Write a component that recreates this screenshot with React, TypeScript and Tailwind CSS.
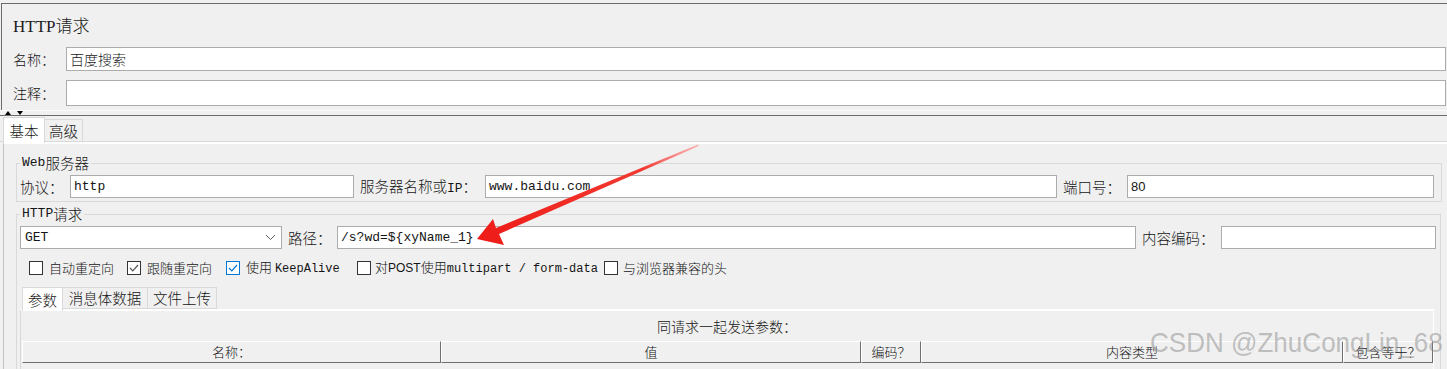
import React from "react";

const mono = "font-['Liberation_Mono','Noto_Sans_CJK_SC',monospace]";

function Field({ className = "", children }: { className?: string; children?: React.ReactNode }) {
  return (
    <div className={`h-[23px] bg-white border border-[#acacac] flex items-center px-[3px] shrink-0 ${className}`}>
      {children}
    </div>
  );
}

function Check({ checked, blue }: { checked?: boolean; blue?: boolean }) {
  const border = blue ? "border-[#0078d7]" : "border-[#333333]";
  return (
    <div className={`w-[14px] h-[14px] bg-white border ${border} flex items-center justify-center shrink-0`}>
      {checked && (
        <svg width="10" height="8" viewBox="0 0 10 8">
          <polyline points="1,4 3.8,6.8 9,1" fill="none" stroke={blue ? "#0078d7" : "#555555"} strokeWidth="1.2" />
        </svg>
      )}
    </div>
  );
}

function HeaderCell({ className = "", children }: { className?: string; children?: React.ReactNode }) {
  return (
    <div
      className={`h-[22px] flex items-center justify-center text-[13px] border-t border-l border-white border-r border-b border-r-[#6f6f6f] border-b-[#6f6f6f] ${className}`}
    >
      {children}
    </div>
  );
}

function Legend({ children }: { children: React.ReactNode }) {
  return (
    <legend className="ml-[3px] px-[2px] h-[16px] leading-[16px] text-[14.5px] whitespace-nowrap">
      <div className="h-[16px] flex items-center leading-[16px]">{children}</div>
    </legend>
  );
}

export default function App() {
  return (
    <div className="relative w-[1447px] h-[369px] overflow-hidden bg-[#f0f0f0] text-[#151515] font-light font-['Noto_Sans_CJK_SC',sans-serif]">
      {/* top: name / comment */}
      <div className="pt-[3px]">
        <div className="ml-px h-[107px] border-t border-l border-[#6b6b6b] flex flex-col">
          <div className="h-[43px] pt-[3px] pl-[11px] flex items-center text-[17px] text-[#1c1c1c] font-['Liberation_Serif','Noto_Sans_CJK_SC',serif]">
            HTTP请求
          </div>
          <div className="h-[24px] flex items-center pl-[11px] pr-px">
            <span className="w-[53px] text-[14px]">名称：</span>
            <div className="flex-1 h-full bg-white border border-[#acacac] flex items-center px-[3px] text-[14px]">百度搜索</div>
          </div>
          <div className="mt-[9px] h-[26px] flex items-center pl-[11px] pr-px">
            <span className="w-[53px] text-[14px]">注释：</span>
            <div className="flex-1 h-full bg-white border border-[#acacac]" />
          </div>
        </div>
      </div>

      {/* split divider */}
      <div className="h-px bg-[#fbfbfb]" />
      <div className="h-[4px] flex items-end gap-[6px] pl-[5px]">
        <div className="w-0 h-0 border-l-[3px] border-r-[3px] border-b-[4px] border-l-transparent border-r-transparent border-b-black" />
        <div className="w-0 h-0 border-l-[3px] border-r-[3px] border-t-[4px] border-l-transparent border-r-transparent border-t-black" />
      </div>
      <div className="h-px bg-[#6b6b6b]" />

      {/* main tabs */}
      <div className="h-[26px] flex items-end pl-[3px] border-b border-[#d9d9d9] text-[14.5px]">
        <div className="relative h-[26px] -mb-[2px] w-[42px] bg-white border-t border-l border-r border-[#d9d9d9] flex items-center justify-center">
          基本
        </div>
        <div className="h-[22px] w-[38px] border-t border-r border-[#d9d9d9] flex items-center justify-center">高级</div>
      </div>

      <div className="ml-[3px] h-[300px] border-l border-[#c4c4c4] border-t-2 border-t-white pl-[12px] pt-[11px]">
        {/* Web server */}
        <fieldset className="w-[1426px] border border-[#d9d9d9]">
          <Legend>
            <span className={`${mono} text-[13px] font-normal`}>Web</span>服务器
          </Legend>
          <div className="h-[30px] flex items-start pt-[4px] pl-[3px] text-[14.5px]">
            <div className="h-[23px] flex items-center">
              <span className="w-[50px]">协议：</span>
              <Field className={`w-[284px] ${mono} font-normal text-[13px]`}>http</Field>
              <span className="ml-[6px] w-[125px] whitespace-nowrap">
                服务器名称或<span className={`${mono} font-normal text-[13px]`}>IP</span>：
              </span>
              <Field className={`w-[572px] ${mono} font-normal text-[13px]`}>www.baidu.com</Field>
              <span className="ml-[6px] w-[64px]">端口号：</span>
              <Field className="w-[307px] text-[13px] font-normal font-['Liberation_Sans',sans-serif]">80</Field>
            </div>
          </div>
        </fieldset>

        {/* HTTP request */}
        <fieldset className="mt-[4px] w-[1425px] h-[400px] border border-[#d9d9d9]">
          <Legend>
            <span className={`${mono} text-[13px] font-normal`}>HTTP</span>请求
          </Legend>
          <div className="h-[27px] flex items-end pl-[3px] text-[14.5px]">
            <div className="h-[23px] flex items-center">
              <Field className={`w-[262px] justify-between ${mono} font-normal text-[13px]`}>
                <span className="pl-px">GET</span>
                <svg width="11" height="7" viewBox="0 0 11 7" className="mr-[2px]">
                  <polyline points="1,1 5.5,5.5 10,1" fill="none" stroke="#606060" strokeWidth="1" />
                </svg>
              </Field>
              <span className="ml-[6px] w-[49px]">路径：</span>
              <Field className={`w-[799px] ${mono} font-normal text-[13px]`}>/s?wd=${"{"}xyName_1{"}"}</Field>
              <span className="ml-[6px] w-[79px]">内容编码：</span>
              <Field className="w-[215px]" />
            </div>
          </div>

          <div className="mt-[12px] h-[14px] flex items-center pl-[12px] text-[13px] leading-[14px]">
            <div className="w-[98px] flex items-center gap-[6px] shrink-0">
              <Check />
              <span>自动重定向</span>
            </div>
            <div className="w-[99px] flex items-center gap-[6px] shrink-0">
              <Check checked />
              <span>跟随重定向</span>
            </div>
            <div className="w-[131px] flex items-center gap-[6px] shrink-0">
              <Check checked blue />
              <span className="whitespace-nowrap">
                使用 <span className={`${mono} font-normal text-[12px]`}>KeepAlive</span>
              </span>
            </div>
            <div className="w-[247px] flex items-center gap-[4px] shrink-0">
              <Check />
              <span className="whitespace-nowrap">
                对<span className="font-['Liberation_Sans',sans-serif] font-normal text-[12px]">POST</span>使用
                <span className={`${mono} font-normal text-[12px]`}>multipart / form-data</span>
              </span>
            </div>
            <div className="flex items-center gap-[5px]">
              <Check />
              <span>与浏览器兼容的头</span>
            </div>
          </div>

          {/* parameters tabs */}
          <div className="mt-[11px] ml-[3px] w-[1414px]">
            <div className="h-[23px] flex items-end pl-[2px] text-[14.5px]">
              <div className="relative h-[24px] -mb-[2px] w-[41px] bg-white border-t border-l border-r border-[#d9d9d9] flex items-center justify-center">
                参数
              </div>
              <div className="h-[22px] w-[85px] border-t border-r border-b border-[#d9d9d9] flex items-center justify-center">
                消息体数据
              </div>
              <div className="h-[22px] w-[69px] border-t border-r border-b border-[#d9d9d9] flex items-center justify-center">
                文件上传
              </div>
            </div>
            <div className="h-[80px] border-l border-[#d9d9d9] border-t-2 border-t-white border-r border-r-white">
              <div className="h-[30px] flex items-center justify-center text-[14px]">同请求一起发送参数：</div>
              <div className="ml-px flex">
                <HeaderCell className="w-[419px]">名称：</HeaderCell>
                <HeaderCell className="w-[420px]">值</HeaderCell>
                <HeaderCell className="w-[60px]">编码？</HeaderCell>
                <HeaderCell className="w-[422px]">内容类型</HeaderCell>
                <HeaderCell className="flex-1">包含等于？</HeaderCell>
              </div>
            </div>
          </div>
        </fieldset>
      </div>

      {/* annotation arrow */}
      <svg className="absolute inset-0 pointer-events-none" width="1447" height="369" viewBox="0 0 1447 369">
        <defs>
          <linearGradient id="arrowFill" gradientUnits="userSpaceOnUse" x1="698" y1="145" x2="480" y2="238">
            <stop offset="0" stopColor="#ff8a8a" stopOpacity="0.6" />
            <stop offset="0.25" stopColor="#f23a32" />
            <stop offset="1" stopColor="#ee1c18" />
          </linearGradient>
        </defs>
        <polygon
          points="477,239 493,219 496,228 698,144.5 698.8,146 499,234 504,245"
          fill="url(#arrowFill)"
        />
      </svg>

      {/* watermark */}
      <div className="absolute left-[1150px] top-[329px] text-[28px] font-normal leading-none whitespace-nowrap origin-left scale-x-[0.93] text-[#8a8a8a]/50 font-['Liberation_Sans',sans-serif] pointer-events-none">
        CSDN @ZhuCongLin_68
      </div>
    </div>
  );
}
